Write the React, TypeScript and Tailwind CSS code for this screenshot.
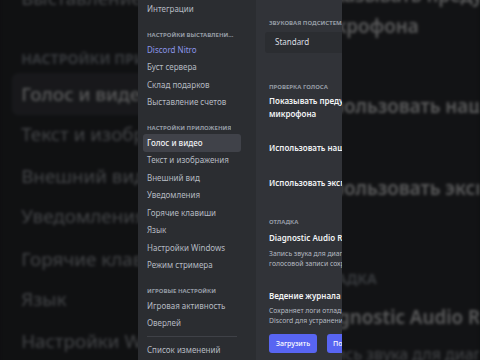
import React from "react";

const font = { fontFamily: '"Noto Sans", "Open Sans", sans-serif' };

function Item({ children, active, nitro }: { children: React.ReactNode; active?: boolean; nitro?: boolean }) {
  return (
    <div
      className={
        "h-[17.5px] px-[4px] rounded-[3px] flex items-center text-[8px] leading-none whitespace-nowrap " +
        (active ? "bg-[#404249] text-[#f2f3f5] font-medium" : nitro ? "text-[#8c96ea]" : "text-[#b5bac1]")
      }
    >
      {children}
    </div>
  );
}

function Header({ children }: { children: React.ReactNode }) {
  return (
    <div className="h-[13px] mt-[10px] px-[4px] flex items-center text-[6px] font-bold uppercase text-[#949ba4] leading-none whitespace-nowrap overflow-hidden">
      <span className="truncate">{children}</span>
    </div>
  );
}

function Frame() {
  return (
    <div className="w-[204px] h-[360px] flex overflow-hidden" style={font}>
      <div className="w-[118px] shrink-0 bg-[#2b2d31] pl-[5px] pr-[15px] pt-[0.5px] flex flex-col">
        <Item>Интеграции</Item>
        <Header>Настройки выставления счетов</Header>
        <Item nitro>Discord Nitro</Item>
        <Item>Буст сервера</Item>
        <Item>Склад подарков</Item>
        <Item>Выставление счетов</Item>
        <Header>Настройки приложения</Header>
        <Item active>Голос и видео</Item>
        <Item>Текст и изображения</Item>
        <Item>Внешний вид</Item>
        <Item>Уведомления</Item>
        <Item>Горячие клавиши</Item>
        <Item>Язык</Item>
        <Item>Настройки Windows</Item>
        <Item>Режим стримера</Item>
        <Header>Игровые настройки</Header>
        <Item>Игровая активность</Item>
        <Item>Оверлей</Item>
        <div className="h-px bg-[#3f4147] mx-[4px] mt-[4px] mb-[4.5px]" />
        <Item>Список изменений</Item>
      </div>
      <div className="flex-1 bg-[#313338] pl-[13px] overflow-hidden whitespace-nowrap flex flex-col leading-none">
        <div className="mt-[17.5px] h-[10px] flex items-center text-[6px] font-bold uppercase text-[#949ba4]">
          Звуковая подсистема
        </div>
        <div className="mt-[4px] h-[21px] -ml-[4px] rounded-l-[3px] bg-[#2b2d31] flex items-center pl-[10px] text-[8px] text-[#dbdee1]">
          Standard
        </div>
        <div className="mt-[29px] h-[10px] flex items-center text-[6px] font-bold uppercase text-[#949ba4]">
          Проверка голоса
        </div>
        <div className="mt-[2.5px] text-[8px] leading-[13px] font-semibold text-[#f2f3f5]">
          <div>Показывать предупреждение об отключении</div>
          <div>микрофона</div>
        </div>
        <div className="mt-[21px] text-[8px] leading-[13px] font-semibold text-[#f2f3f5]">
          Использовать нашу новейшую технологию
        </div>
        <div className="mt-[22px] text-[8px] leading-[13px] font-semibold text-[#f2f3f5]">
          Использовать экспериментальный метод
        </div>
        <div className="mt-[27.5px] h-[10px] flex items-center text-[6px] font-bold uppercase text-[#949ba4]">
          Отладка
        </div>
        <div className="mt-[4.5px] text-[8px] leading-[13px] font-semibold text-[#f2f3f5]">
          Diagnostic Audio Recording
        </div>
        <div className="mt-[4.5px] text-[6.8px] leading-[10px] text-[#b5bac1]">
          <div>Запись звука для диагностики проблем</div>
          <div>голосовой записи сохраняется</div>
        </div>
        <div className="mt-[20.5px] text-[8px] leading-[13px] font-semibold text-[#f2f3f5]">
          Ведение журнала отладки
        </div>
        <div className="mt-[3.5px] text-[6.8px] leading-[10px] text-[#b5bac1]">
          <div>Сохраняет логи отладки, чтобы помочь</div>
          <div>Discord для устранения проблем</div>
        </div>
        <div className="mt-[8px] flex gap-[10px]">
          <div className="w-[48px] h-[19px] shrink-0 rounded-[3px] bg-[#5865f2] flex items-center justify-center text-[7px] font-medium text-white">
            Загрузить
          </div>
          <div className="w-[60px] h-[19px] shrink-0 rounded-[3px] bg-[#5865f2] flex items-center pl-[6px] text-[7px] font-medium text-white">
            Показать папку
          </div>
        </div>
      </div>
    </div>
  );
}

export default function App() {
  return (
    <div className="relative w-[480px] h-[360px] overflow-hidden bg-[#0f1011]">
      <div className="absolute left-0 top-[-242px] origin-top-left scale-[2.35] brightness-[0.37] blur-[0.7px]">
        <Frame />
      </div>
      <div className="relative ml-[138px] w-[204px] h-[360px]">
        <Frame />
      </div>
    </div>
  );
}
